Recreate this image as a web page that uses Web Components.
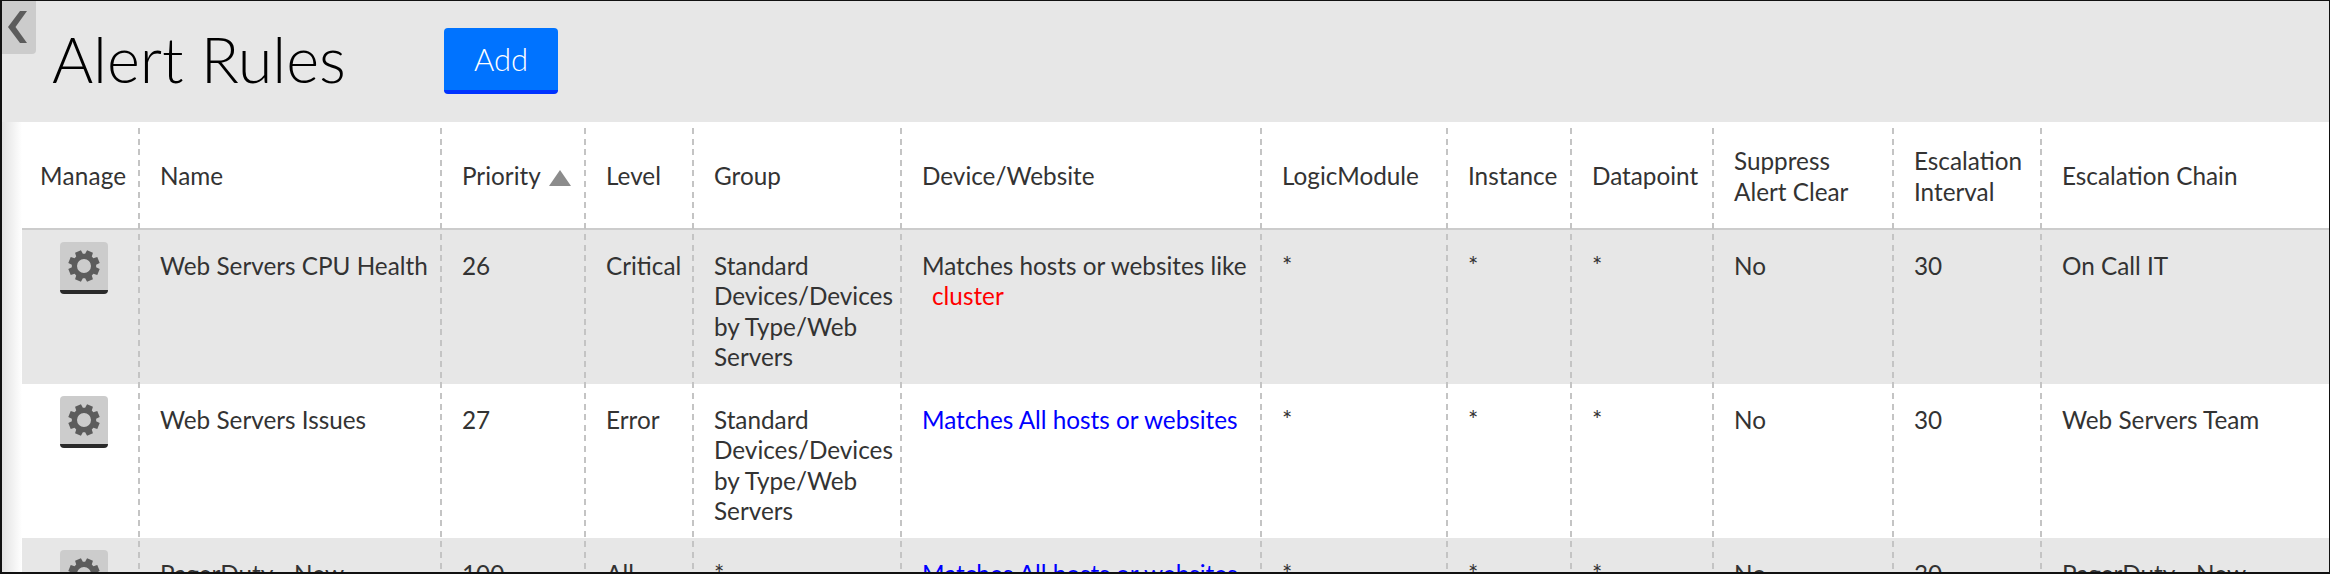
<!DOCTYPE html>
<html><head><meta charset="utf-8"><title>Alert Rules</title>
<style>
html,body{margin:0;padding:0;height:574px;overflow:hidden;background:#fff}
body{font-family:"Lato","Liberation Sans",sans-serif;color:#333}
</style></head><body>
<alert-page>
  <page-header title="Alert Rules" action="Add"></page-header>
  <rules-table></rules-table>
</alert-page>
<script>
const COLS='117px 302px 144px 108px 208px 360px 186px 124px 142px 180px 148px 288px';
class AlertPage extends HTMLElement{constructor(){super();this.attachShadow({mode:'open'}).innerHTML=`<style>
:host{display:flex;flex-direction:column;box-sizing:border-box;height:574px;width:2330px;overflow:hidden;border:solid #111;border-width:1px 1px 2px 2px;position:relative;background:#fff}
.shade{position:absolute;left:0;top:121px;bottom:0;width:20px;background:linear-gradient(90deg,#e2e2e2,#fff)}
</style><div class="shade"></div><slot></slot>`}}
class PageHeader extends HTMLElement{constructor(){super();this.attachShadow({mode:'open'}).innerHTML=`<style>
:host{display:flex;align-items:flex-start;flex:none;height:121px;background:#e7e7e7;position:relative}
.tab{position:absolute;left:-2px;top:-1px;width:36px;height:54px;background:#ccc;border-bottom-right-radius:4px;display:flex;align-items:center;justify-content:center}
h1{margin:20px 0 0 50px;width:392px;font:300 63px/76px Lato,sans-serif;color:#000}
button{margin:27px 0 0;width:114px;height:66px;box-sizing:border-box;border:0;border-bottom:4px solid #0033ff;border-radius:4px;background:#0073ff;color:#fff;font:300 31px/1 Lato,sans-serif;padding:0}
</style><div class="tab"><svg width="20" height="32" viewBox="0 0 20 32"><path d="M19 0H12L0 16 12 32H19L7.5 16Z" fill="#5c5c5c"/></svg></div>
<h1></h1><button type="button"></button>`;
this.shadowRoot.querySelector('h1').textContent=this.getAttribute('title');
this.shadowRoot.querySelector('button').textContent=this.getAttribute('action');}}
class GearButton extends HTMLElement{constructor(){super();
let d='';const n=8,R=16,r=12.2;for(let i=0;i<n;i++){const a=(i+.5)*2*Math.PI/n-Math.PI/2,w=.2,p=(ang,rad)=>`${(16+rad*Math.cos(ang)).toFixed(2)} ${(16+rad*Math.sin(ang)).toFixed(2)}`;
d+=(i?'L':'M')+p(a-w-.1,r)+'L'+p(a-w,R)+'L'+p(a+w,R)+'L'+p(a+w+.1,r);}
d+='Z M16 9a7 7 0 1 0 0 14a7 7 0 1 0 0-14Z';
this.attachShadow({mode:'open'}).innerHTML=`<style>
:host{display:flex;width:48px;height:52px;box-sizing:border-box;background:#ccc;border-bottom:4px solid #2a2a2a;border-radius:4px;align-items:flex-start;justify-content:center;padding-top:8px}
</style><svg width="32" height="32" viewBox="0 0 32 32"><path fill="#5c5c5c" fill-rule="evenodd" d="${d}"/></svg>`}}
class RulesTable extends HTMLElement{constructor(){super();
const head=['Manage','Name','Priority','Level','Group','Device/Website','LogicModule','Instance','Datapoint','Suppress<br>Alert Clear','Escalation<br>Interval','Escalation Chain'];
const G='Standard Devices/Devices by Type/Web Servers';
const M='<span class="all">Matches All hosts or websites</span>';
const rows=[
['Web Servers CPU Health','26','Critical',G,'Matches hosts or websites like <span class="like">cluster</span>','*','*','*','No','30','On Call IT'],
['Web Servers Issues','27','Error',G,M,'*','*','*','No','30','Web Servers Team'],
['PagerDuty - New','100','All','*',M,'*','*','*','No','30','PagerDuty - New']];
const cell=(h,c='')=>`<div class="c ${c}">${h}</div>`;
const hdr=head.map((h,i)=>cell(h+(i==2?'<svg class="sort" width="22" height="16" viewBox="0 0 22 16"><path d="M11 0L22 16H0Z" fill="#8c8c8c"/></svg>':''),i==0?'m':'')).join('');
const body=rows.map((r,i)=>`<div class="row ${i%2?'':'odd'}">`+cell('<gear-button></gear-button>','g')+r.map(x=>cell(x)).join('')+'</div>').join('');
this.attachShadow({mode:'open'}).innerHTML=`<style>
:host{display:block;margin-left:20px;position:relative;flex:1;min-height:0;font:400 24.3px/30.4px Lato,sans-serif;color:#333}
.head,.row,.rules{display:grid;grid-template-columns:${COLS}}
.head{height:108px;align-items:center;border-bottom:2px solid #ccc;box-sizing:border-box;padding-top:3px}
.row{height:154px;align-items:start}
.odd{background:#e7e7e7}
.c{padding:0 8px 0 21px;box-sizing:border-box}
.m{padding-left:18px;padding-right:0;letter-spacing:.2px}
.row .c{padding-top:21px}
.row .g{padding:12px 0 0 38px}
.sort{margin-left:8px;vertical-align:-1px}
.all{color:#0000ff}.like{color:#f00;margin-left:10px}
.rules{position:absolute;left:0;right:0;top:6px;bottom:0;pointer-events:none}
.rules i{position:relative}
.rules i::after{content:"";position:absolute;top:0;bottom:0;right:-1px;width:2px;background:repeating-linear-gradient(180deg,#c4c4c4 0 6px,transparent 6px 10.6px)}
.rules i:last-child::after{display:none}
</style><div class="head">${hdr}</div>${body}<div class="rules">${head.map(()=>'<i></i>').join('')}</div>`}}
customElements.define('alert-page',AlertPage);
customElements.define('page-header',PageHeader);
customElements.define('gear-button',GearButton);
customElements.define('rules-table',RulesTable);
</script></body></html>
